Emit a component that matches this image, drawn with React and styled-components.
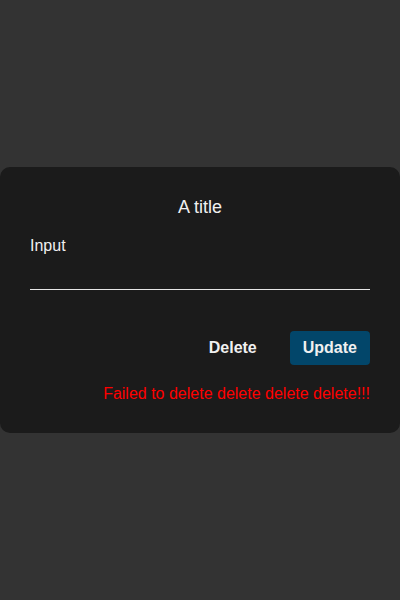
import React from 'react'
import styled, { createGlobalStyle } from 'styled-components'

const Global = createGlobalStyle`
html, body {
  margin: 0;
  padding: 0;
  height: 100%;
  background: #333333;
  font-family: "Liberation Sans", Arial, sans-serif;
}
#root {
  height: 100%;
}
`

const Page = styled.div`
height: 100vh;
display: flex;
align-items: center;
justify-content: center;
`

const Card = styled.div`
width: 100%;
box-sizing: border-box;
background: #1b1b1b;
border-radius: 10px;
padding: 30px 30px 30px 30px;
display: flex;
flex-direction: column;
color: #f0f0f0;
`

const Title = styled.h2`
margin: 0 0 19px 0;
text-align: center;
font-weight: 400;
font-size: 18px;
line-height: 21px;
`

const Label = styled.label`
font-size: 16px;
line-height: 18px;
`

const Field = styled.input`
display: block;
width: 100%;
box-sizing: border-box;
height: 35px;
background: transparent;
border: none;
border-bottom: 1px solid #e6e6e6;
color: #f0f0f0;
font-size: 16px;
font-family: inherit;
outline: none;
padding: 0;
`

const Actions = styled.div`
display: flex;
justify-content: flex-end;
gap: 20px;
margin-top: 41px;
`

const Button = styled.button`
height: 34px;
padding: 0 13px;
border: none;
border-radius: 4px;
font-family: inherit;
font-weight: 700;
font-size: 16px;
color: #f0f0f0;
background: ${p => (p.$primary ? '#02466a' : 'transparent')};
cursor: pointer;
`

const Error = styled.p`
margin: 20px 0 0 0;
text-align: right;
color: #ff0000;
font-size: 16px;
line-height: 18px;
`

export default function App() {
  return (
    <>
      <Global />
      <Page>
        <Card>
          <Title>A title</Title>
          <Label>
            Input
            <Field />
          </Label>
          <Actions>
            <Button>Delete</Button>
            <Button $primary>Update</Button>
          </Actions>
          <Error>Failed to delete delete delete delete!!!</Error>
        </Card>
      </Page>
    </>
  )
}
